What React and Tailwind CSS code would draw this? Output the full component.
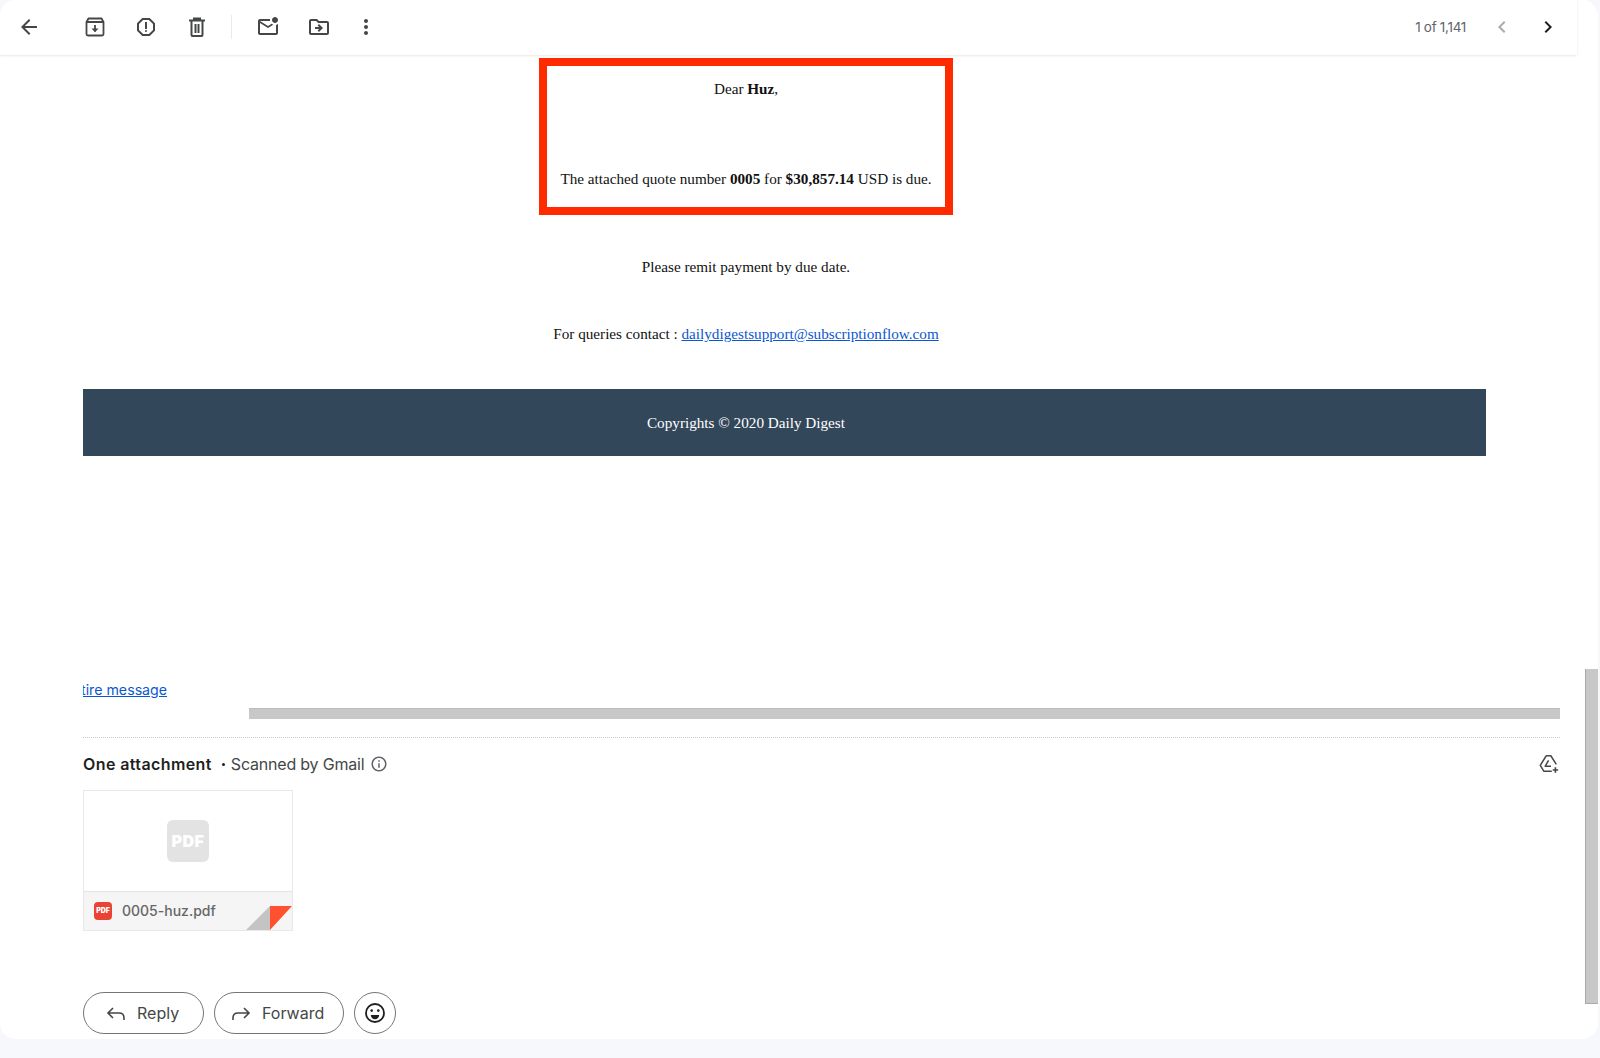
import React from 'react';
import { MdArrowBack, MdOutlineReport, MdOutlineMarkEmailUnread, MdOutlineDriveFileMove, MdMoreVert, MdChevronLeft, MdChevronRight, MdOutlineInfo } from 'react-icons/md';

const serif = "font-['Liberation_Serif',serif]";
const sans = "font-['Inter',sans-serif]";

function TrashIcon() {
  return (
    <svg viewBox="0 0 24 24" className="w-6 h-6 text-[#444746]" fill="none" stroke="currentColor" strokeWidth="2">
      <path d="M4 5.5h16M9 5V3.5h6V5M6.5 6v14a1 1 0 0 0 1 1h9a1 1 0 0 0 1-1V6M10.5 9v9M13.5 9v9" />
    </svg>
  );
}

function ArchiveIcon() {
  return (
    <svg viewBox="0 0 24 24" className="w-6 h-6 text-[#444746]" fill="none" stroke="currentColor" strokeWidth="1.8">
      <path d="M5.5 3.5h13L20.5 7v12a1.5 1.5 0 0 1-1.5 1.5H5A1.5 1.5 0 0 1 3.5 19V7zM3.5 7h17" />
      <path d="M12 10v6.5" />
      <path d="M8.5 13.5h7L12 17.2z" fill="currentColor" stroke="none" />
    </svg>
  );
}

function DriveAddIcon() {
  return (
    <svg viewBox="0 0 24 24" className="w-[22px] h-[22px] text-[#444746]" fill="none" stroke="currentColor" strokeWidth="1.6">
      <path d="M9 3h5l6 9.5M9 3L2.5 13.5 6.5 20H15" strokeLinejoin="round" />
      <path d="M11.5 8l-3.7 6.5h6.4" strokeLinejoin="round" />
      <path d="M19 15.5v6M16 18.5h6" strokeWidth="1.8" />
    </svg>
  );
}

function SmileIcon() {
  return (
    <svg viewBox="0 0 24 24" className="w-6 h-6 text-[#1f1f1f]" fill="none" stroke="currentColor" strokeWidth="1.8">
      <circle cx="12" cy="12" r="9" />
      <circle cx="8.7" cy="9.6" r="1.3" fill="currentColor" stroke="none" />
      <circle cx="15.3" cy="9.6" r="1.3" fill="currentColor" stroke="none" />
      <path d="M7.8 14h8.4a4.2 4.2 0 0 1-8.4 0z" fill="currentColor" stroke="none" />
    </svg>
  );
}

function ReplyIcon({ flip }) {
  return (
    <svg viewBox="0 0 24 24" className={`w-6 h-6 text-[#444746] ${flip ? '-scale-x-100' : ''}`} fill="none" stroke="currentColor" strokeWidth="1.6">
      <path d="M9 7l-5 5 5 5M4.5 12H15c3 0 5 2 5 5v2" />
    </svg>
  );
}

function ToolButton({ icon: Icon, className = '' }) {
  return (
    <button className={`w-6 h-6 flex items-center justify-center text-[#444746] ${className}`}>
      <Icon className="w-6 h-6" />
    </button>
  );
}

function PillButton({ icon, label, className }) {
  return (
    <button className={`h-[42px] rounded-full border border-[#747775] flex items-center ${className}`}>
      {icon}
      <span className={`${sans} text-base text-[#444746]`}>{label}</span>
    </button>
  );
}

export default function App() {
  return (
    <div className="w-[1600px] h-[1058px] bg-[#f6f8fc] overflow-hidden">
      <div className="relative w-[1598px] h-[1039px] bg-white rounded-2xl overflow-hidden">
        {/* Toolbar */}
        <div className="w-[1577px] h-[55px] flex items-center shadow-[0_1px_2px_rgba(0,0,0,0.1)] pl-[17px] pr-[17px] pb-[2px]">
          <ToolButton icon={MdArrowBack} />
          <div className="flex items-center gap-[27px] ml-[42px]">
            <ArchiveIcon />
            <ToolButton icon={MdOutlineReport} />
            <TrashIcon />
          </div>
          <div className="w-px h-6 bg-[#e8eaed] ml-[22px]" />
          <div className="flex items-center gap-[27px] ml-[24px]">
            <ToolButton icon={MdOutlineMarkEmailUnread} />
            <ToolButton icon={MdOutlineDriveFileMove} />
            <ToolButton icon={MdMoreVert} className="-ml-[4px]" />
          </div>
          <span className={`${sans} ml-auto pt-[2px] text-[13.5px] text-[#5f6368] tracking-[-0.3px]`}>1 of 1,141</span>
          <ToolButton icon={MdChevronLeft} className="ml-[24px] !text-[#a8abaf]" />
          <ToolButton icon={MdChevronRight} className="ml-[22px] !text-[#1f1f1f]" />
        </div>

        {/* Message body */}
        <div className="pl-[83px] pr-[38px]">
          <div className={`${serif} text-[15.2px] leading-[18px] text-[#111] w-[1403px]`}>
            <div className="pr-[77px] flex flex-col items-center">
              <div className="w-[414px] h-[157px] mt-[3px] border-8 border-[#ff2a00] text-center pt-[14px]">
                <p>Dear <b>Huz</b>,</p>
                <p className="mt-[72px] whitespace-nowrap">
                  The attached quote number <b>0005</b> for <b>$30,857.14</b> USD is due.
                </p>
              </div>
              <p className="mt-[43px]">Please remit payment by due date.</p>
              <p className="mt-[49px]">
                For queries contact : <a className="text-[#0b57d0] underline">dailydigestsupport@subscriptionflow.com</a>
              </p>
            </div>
            <div className="h-[67px] mt-[46px] bg-[#33475b] text-white flex items-center justify-center pr-[77px]">
              Copyrights © 2020 Daily Digest
            </div>
          </div>

          <div className="mt-[224px] overflow-hidden">
            <a className={`block -ml-[2px] ${sans} text-[14.2px] leading-5 text-[#0b57d0] underline`}>tire message</a>
          </div>
          <div className="h-[11px] ml-[166px] mt-[8px] bg-[#c8c8c8] border-t border-[#bbb]" />
          <div className="border-t border-dotted border-[#ccc] mt-[18px]" />

          {/* Attachments */}
          <div className="flex items-center h-6 mt-[14px]">
            <span className={`${sans} text-base font-semibold text-[#1f1f1f] tracking-[0.4px]`}>One attachment</span>
            <span className="ml-[10px] mr-[6px] w-[3px] h-[3px] bg-[#1f1f1f] rounded-full" />
            <span className={`${sans} text-base text-[#444746] tracking-[-0.2px]`}>Scanned by Gmail</span>
            <MdOutlineInfo className="w-[18px] h-[18px] ml-[6px] text-[#5f6368]" />
            <span className="ml-auto"><DriveAddIcon /></span>
          </div>

          <div className="relative w-[210px] h-[141px] mt-[14px] border border-[#e8e8e8] overflow-hidden">
            <div className="h-[101px] flex items-center justify-center border-b border-[#e5e5e5]">
              <div className="w-[42px] h-[42px] rounded-md bg-[#e3e3e3] flex items-center justify-center">
                <span className={`${sans} text-[16px] font-black text-white tracking-[0.5px]`}>PDF</span>
              </div>
            </div>
            <div className="h-[38px] bg-[#f5f5f5] flex items-center pl-[10px]">
              <div className="w-[18px] h-[18px] rounded-sm bg-[#ea4335] flex items-center justify-center">
                <span className={`${sans} text-[7px] font-black text-white`}>PDF</span>
              </div>
              <span className={`${sans} ml-[10px] text-sm font-medium text-[#666]`}>0005-huz.pdf</span>
            </div>
            <svg viewBox="0 0 46 24" className="absolute right-0 bottom-0 w-[46px] h-6">
              <polygon points="0,24 24,0 24,24" fill="#c4c4c4" />
              <polygon points="24,0 46,0 24,24" fill="#ff5030" />
            </svg>
          </div>

          {/* Reply actions */}
          <div className="flex items-center gap-[10px] mt-[61px]">
            <PillButton
              className="w-[121px] pl-[20px] gap-[9px]"
              icon={<ReplyIcon />}
              label="Reply"
            />
            <PillButton
              className="w-[130px] pl-[14px] gap-[9px]"
              icon={<ReplyIcon flip />}
              label="Forward"
            />
            <button className="w-[42px] h-[42px] rounded-full border border-[#747775] flex items-center justify-center">
              <SmileIcon />
            </button>
          </div>
        </div>

        {/* Overlay scrollbar */}
        <div className="absolute left-[1585px] top-[669px] w-[13px] h-[335px] bg-[#c8c8c8] border-l border-b border-[#aaa]" />
      </div>
    </div>
  );
}
